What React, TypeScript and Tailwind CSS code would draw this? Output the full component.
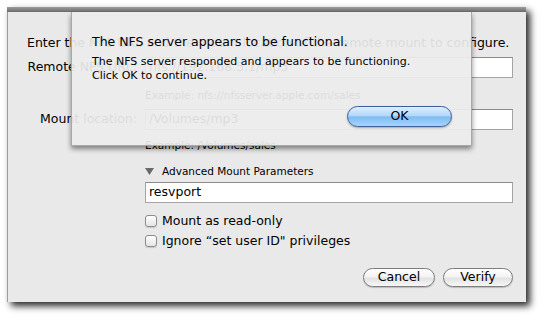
const font = { fontFamily: '"DejaVu Sans", "Liberation Sans", sans-serif' };

function Field({ value }: { value: string }) {
  return (
    <div className="w-[368px] h-[21px] bg-white border border-[#a4a4a4] border-t-[#8a8a8a] flex items-center pl-[3px] text-[12.5px] text-black">
      {value}
    </div>
  );
}

function Checkbox({ label }: { label: string }) {
  return (
    <div className="flex items-center gap-[5px] h-[16px] text-[12.5px]">
      <div className="w-[12px] h-[12px] rounded-[3px] border border-[#8c8c8c] bg-[linear-gradient(to_bottom,#ffffff,#e4e4e4)] shadow-[0_1px_1px_rgba(0,0,0,0.15)]" />
      <span>{label}</span>
    </div>
  );
}

function PillButton({ label, width }: { label: string; width: string }) {
  return (
    <button
      className={`${width} h-[19px] rounded-full border border-[#7e7e7e] bg-[linear-gradient(to_bottom,#ffffff_0%,#f3f3f3_45%,#e2e2e2_55%,#f7f7f7_100%)] text-[12.5px] text-black flex items-center justify-center shadow-[0_1px_1px_rgba(0,0,0,0.2)]`}
    >
      {label}
    </button>
  );
}

export default function App() {
  return (
    <div className="relative w-[549px] h-[327px] bg-white overflow-hidden pl-[7px] pt-[7px] text-black" style={font}>
      <div className="w-[519px] h-[295px] flex flex-col shadow-[4px_4px_7px_rgba(0,0,0,0.85)]">
        <div className="h-[5px] bg-[linear-gradient(to_bottom,#9d9d9d,#6a6a6a)]" />
        <div className="flex-1 bg-[#e9e9e9] border-l border-[#9c9c9c] flex flex-col">
          <p className="pl-[19px] pt-[23px] h-[39px] text-[12.5px] leading-[16px] whitespace-nowrap">
            Enter the NFS URL and the mount location of the remote mount to configure.
          </p>

          <div className="flex items-center gap-[8px] mt-[6px]">
            <span className="w-[129px] text-right text-[12.5px] whitespace-nowrap">Remote NFS URL:</span>
            <Field value="nfs://192.168.5.1/mp3" />
          </div>
          <p className="ml-[137px] mt-[10px] text-[10.5px] leading-[14px]">Example: nfs://nfsserver.apple.com/sales</p>

          <div className="flex items-center gap-[8px] mt-[7px]">
            <span className="w-[129px] text-right text-[12.5px] whitespace-nowrap">Mount location:</span>
            <Field value="/Volumes/mp3" />
          </div>
          <p className="ml-[137px] mt-[8px] text-[10.5px] leading-[14px]">Example: /Volumes/sales</p>

          <div className="ml-[137px] mt-[13px] flex items-center gap-[8px] h-[14px] text-[10.5px]">
            <svg width="9" height="8" viewBox="0 0 9 8">
              <path d="M0 0 H9 L4.5 7 Z" fill="#6a6a6a" />
            </svg>
            <span>Advanced Mount Parameters</span>
          </div>
          <div className="ml-[137px] mt-[3px]">
            <Field value="resvport" />
          </div>

          <div className="ml-[137px] mt-[10px] flex flex-col gap-[4px]">
            <Checkbox label="Mount as read-only" />
            <Checkbox label={'Ignore \u201cset user ID" privileges'} />
          </div>

          <div className="mt-[19px] ml-[355px] flex gap-[8px]">
            <PillButton label="Cancel" width="w-[72px]" />
            <PillButton label="Verify" width="w-[70px]" />
          </div>
        </div>
      </div>

      {/* alert sheet over the form */}
      <div className="absolute left-[71px] top-[12px] w-[401px] h-[134px] bg-[rgba(236,236,236,0.93)] border-x border-b border-[#a8a8a8] shadow-[0_3px_5px_rgba(0,0,0,0.45)] flex flex-col pl-[20px] pr-[19px] pt-[22px]">
        <p className="text-[12.5px] leading-[16px]">The NFS server appears to be functional.</p>
        <div className="mt-[5px] text-[11px] leading-[14px]">
          <p>The NFS server responded and appears to be functioning.</p>
          <p>Click OK to continue.</p>
        </div>
        <div className="mt-[23px] flex justify-end">
          <button className="w-[105px] h-[21px] rounded-full border border-[#3e5f97] bg-[linear-gradient(to_bottom,#dbeefe_0%,#b4d9fa_45%,#7ebcf2_52%,#a6d4fb_100%)] text-[12.5px] flex items-center justify-center shadow-[0_1px_2px_rgba(0,0,0,0.3)]">
            OK
          </button>
        </div>
      </div>
    </div>
  );
}
